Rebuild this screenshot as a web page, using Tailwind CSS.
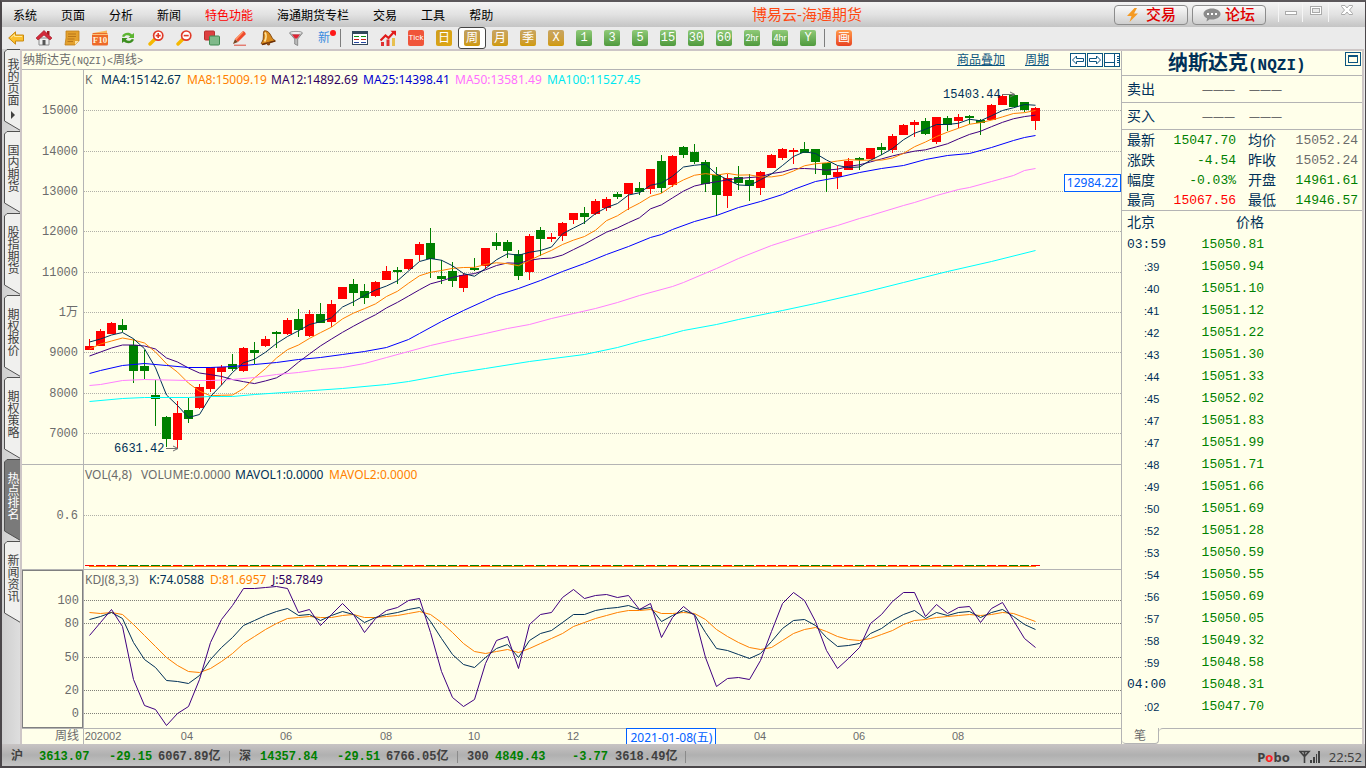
<!DOCTYPE html>
<html lang="zh-CN">
<head>
<meta charset="utf-8">
<meta name="viewport" content="width=device-width, initial-scale=1">
<title>博易云-海通期货</title>
<script src="https://cdn.jsdelivr.net/npm/@tailwindcss/browser@4"></script>
</head>
<body class="h-screen overflow-hidden bg-[#ebebeb] font-['Liberation_Sans','Noto_Sans_CJK_SC',sans-serif] text-xs text-black">
<div class="flex h-full flex-col border-t-2 border-r border-b-2 border-l-2 border-[#4b474a] border-t-[#5b575a]">

  <!-- Menu bar -->
  <header class="relative flex h-[25px] shrink-0 items-center bg-linear-to-b from-[#f4f4f4] via-[#e2e2e2] to-[#c4c4c4] pl-[11px]">
    <nav class="flex gap-6 pt-[2px] leading-4" aria-label="主菜单">
      <button>系统</button><button>页面</button><button>分析</button><button>新闻</button>
      <button class="text-[#ff0000]">特色功能</button><button>海通期货专栏</button>
      <button>交易</button><button>工具</button><button>帮助</button>
    </nav>
    <h1 class="absolute left-[750px] text-[15px] leading-5 text-[#ff4812]">博易云-海通期货</h1>
    <div class="ml-auto flex items-center gap-1">
      <button class="flex h-5 w-[74px] items-center justify-center gap-[6px] rounded border border-[#8c8c8c] bg-linear-to-b from-[#fafafa] to-[#cfcfcf] text-[15px] font-medium leading-4 text-[#e00000]">
        <svg class="size-[14px]" viewBox="0 0 14 14" aria-hidden="true"><path d="M8.500 0 1 8h4.500L3.500 14 12 5.500H8L11 0z" fill="#f59a23"/></svg>交易</button>
      <button class="flex h-5 w-[74px] items-center justify-center gap-1 rounded border border-[#8c8c8c] bg-linear-to-b from-[#fafafa] to-[#cfcfcf] text-[15px] font-medium leading-4 text-[#e00000]">
        <svg class="h-[14px] w-[18px]" viewBox="0 0 18 14" aria-hidden="true"><path d="M9 .5c4.700 0 8.500 2.400 8.500 5.500S13.700 11.500 9 11.500c-.8 0-1.500-.1-2.200-.2L3.500 13.500 4 10.300C1.900 9.300.5 7.800.5 6 .5 2.900 4.300.5 9 .5z" fill="#8b8b8b"/><g fill="#fff"><rect x="4" y="5" width="2" height="2"/><rect x="8" y="5" width="2" height="2"/><rect x="12" y="5" width="2" height="2"/></g></svg>论坛</button>
    </div>
    <div class="flex h-5 self-start pl-[12px] text-[#aaa]">
      <button aria-label="最小化" class="flex h-5 w-6 items-center justify-center border-l border-[#f5f5f5]"><svg width="14" height="14" aria-hidden="true"><rect x="1.500" y="6.500" width="11" height="3" fill="#fff" stroke="#aaa"/></svg></button>
      <button aria-label="还原" class="flex h-5 w-[26px] items-center justify-center border-l border-[#f5f5f5]"><svg width="14" height="14" aria-hidden="true"><rect x="1.500" y="1.500" width="11" height="8" fill="#fff" stroke="#aaa"/><rect x="3.500" y="3.500" width="7" height="4" fill="#e8e8e8" stroke="#aaa"/></svg></button>
      <button aria-label="关闭" class="flex h-5 w-[37px] items-center justify-center border-l border-[#f5f5f5]"><svg width="14" height="14" aria-hidden="true"><path d="M1.500.5h3.500L7 3l2-2.500h3.500v1L9.500 5l3 3.500v1H9L7 7l-2 2.500H1.500v-1l3-3.500-3-3.500z" fill="#fff" stroke="#aaa"/></svg></button>
    </div>
  </header>

  <!-- Toolbar -->
  <div role="toolbar" aria-label="工具栏" class="flex h-[22px] shrink-0 items-center bg-[#ebebeb] [&>button]:flex [&>button]:h-[22px] [&>button]:w-7 [&>button]:shrink-0 [&>button]:items-center [&>button]:justify-center">
    <button aria-label="后退"><svg width="16" height="16" viewBox="0 0 16 16"><path d="M.7 8 7.500 1.800V5h8v6h-8v3.200z" fill="#fbc02d" stroke="#c98a12"/><path d="M3 7.500 6.500 4.500V6.500H14" fill="none" stroke="#ffe89a"/></svg></button>
    <button aria-label="主页"><svg width="16" height="16" viewBox="0 0 16 16"><path d="M3 8h10v7H3z" fill="#efefef" stroke="#8a8a8a"/><path d="M6.500 10h3v5h-3z" fill="#555"/><path d="M11 1h2.500v4H11z" fill="#a01818"/><path d="M8 .5 0 8l2 2 6-5 6 5 2-2z" fill="#d32a3a" stroke="#9d1525" stroke-width=".6"/></svg></button>
    <button aria-label="便笺"><svg width="16" height="16" viewBox="0 0 16 16"><path d="M2 1h13v10l-4 4H1L2 8z" fill="#e3a02c" stroke="#c07f18" stroke-width=".8"/><path d="M15 11h-4v4z" fill="#fbe0a0"/><path d="M4 4h8M4 6.500h8M3.500 9h7M3.500 11.500H9" stroke="#b9761a"/></svg></button>
    <button aria-label="F10"><svg width="16" height="16" viewBox="0 0 16 16"><path d="M1 3 15 .5V4H1z" fill="#f7b55a"/><rect x="0" y="3" width="16" height="12.500" rx="1.500" fill="#ee6a28"/><path d="M0 4.500h16" stroke="#f9c37c"/><text x="8" y="13" text-anchor="middle" font-size="9" font-weight="700" font-family="Liberation Serif" fill="#fff2d8">F10</text></svg></button>
    <button aria-label="刷新"><svg width="16" height="16" viewBox="0 0 16 16"><path d="M2 6.500C3 2.800 9 1.500 12 4.500L14 3v5H8.500l1.700-1.700C8 4.600 5 5 4.300 7z" fill="#5cb531"/><path d="M14 9.500c-1 3.700-7 5-10 2L2 13V8h5.500L5.800 9.700c2.200 1.700 5.200 1.300 5.900-.7z" fill="#3d8f20"/></svg></button>
    <button aria-label="放大"><svg width="16" height="16" viewBox="0 0 16 16"><path d="M6.500 9.500 2 14" stroke="#f5b800" stroke-width="3.400" stroke-linecap="round"/><circle cx="10.200" cy="5.600" r="4.600" fill="#fff" stroke="#e03a28" stroke-width="1.700"/><path d="M7.700 5.600h5M10.200 3.100v5" stroke="#e03a28" stroke-width="1.600"/></svg></button>
    <button aria-label="缩小"><svg width="16" height="16" viewBox="0 0 16 16"><path d="M6.500 9.500 2 14" stroke="#f5b800" stroke-width="3.400" stroke-linecap="round"/><circle cx="10.200" cy="5.600" r="4.600" fill="#fff" stroke="#e03a28" stroke-width="1.700"/><path d="M7.700 5.600h5" stroke="#e03a28" stroke-width="1.600"/></svg></button>
    <button aria-label="叠加"><svg width="16" height="16" viewBox="0 0 16 16"><rect x=".5" y="1" width="10" height="9" rx="1" fill="#dc4040" stroke="#b83030"/><rect x="5.500" y="6" width="10" height="9" rx="1" fill="#7fb98a" stroke="#3f8a50"/></svg></button>
    <button aria-label="画线"><svg width="16" height="16" viewBox="0 0 16 16"><path d="m1 14 2-5 3 3z" fill="#7b4a24"/><path d="M3 9 10.500 1.500c1-1 4 1.800 3 3L6 12z" fill="#ee4a2c"/><path d="M3 9 10.500 1.500l1 .8L4.300 10z" fill="#ff9a6a"/><path d="M2 15.200h12" stroke="#e04a3a" stroke-width="1"/></svg></button>
    <button aria-label="预警"><svg width="16" height="16" viewBox="0 0 16 16"><path d="M4 1c2-.7 4.500.5 6 3l2.500 4.500L15.500 11 2.500 14.500c-1.500-.5-1.500-1.500-.5-2.500C4.500 9 2.500 3 4 1z" fill="#d98a1c" stroke="#7d430c" stroke-width=".9"/><path d="M5 2.500c1.500 2 1.300 6-.5 9" stroke="#ffe09a" stroke-width="1.800" fill="none"/><path d="m2 14.500 13-3.500" stroke="#6b2f08" stroke-width="1.300"/><circle cx="8.500" cy="13.800" r="1.800" fill="#8c4a10"/></svg></button>
    <button aria-label="筛选"><svg width="16" height="16" viewBox="0 0 16 16"><path d="M1.500 3c0-2 13-2 13 0L9.700 9v6.500l-3-1.500V9z" fill="#b9b9b9" stroke="#7c7c7c" stroke-width=".8"/><ellipse cx="8" cy="3" rx="6" ry="1.600" fill="#eee" stroke="#8a8a8a" stroke-width=".6"/><path d="M4 4.500h8L9 8.500H7z" fill="#e02434"/></svg></button>
    <button class="relative text-xs leading-4 text-[#3a8be0]">新<span class="absolute top-[3px] right-[2px] size-[6px] rounded-full bg-[#ff1818]"></span></button>
    <div class="flex w-2 shrink-0 pl-[2px]"><span class="h-[18px] w-px bg-[#7d7d7d]"></span></div>
    <button aria-label="报价"><svg width="16" height="16" viewBox="0 0 16 16" shape-rendering="crispEdges"><path d="M.5 1.500h15v13H.5z" fill="#fff" stroke="#33485c"/><path d="M1 2h14v2H1z" fill="#33485c"/><path d="M2 6.500h5M9 6.500h5" stroke="#109010"/><path d="M2 9.500h5M9 9.500h5" stroke="#d01818"/><path d="M2 12.500h5M9 12.500h5" stroke="#2848a0"/></svg></button>
    <button aria-label="走势"><svg width="16" height="16" viewBox="0 0 16 16"><path d="M1 12h3v4H1zM6.500 9.500h3V16h-3z" fill="#e03030"/><path d="M12 8h3v8h-3z" fill="#e8c050"/><path d="M.5 10.500 5.500 5.500 8.500 8 13.500 2.500" fill="none" stroke="#e01c1c" stroke-width="2.200"/><path d="M10.500.7H16V6z" fill="#e01c1c"/></svg></button>
    <button><span class="flex size-4 items-center justify-center rounded-[2px] bg-[#f0553a] font-['Roboto'] text-[8px] leading-4 font-normal text-white">Tick</span></button>
    <button><span class="flex size-4 items-center justify-center rounded-[2px] bg-linear-to-br from-[#cf9d1c] to-[#e0a810] text-xs leading-4 text-white">日</span></button>
    <button aria-pressed="true" class="rounded-[3px] border border-[#444] bg-white"><span class="flex size-4 items-center justify-center rounded-[2px] bg-linear-to-b from-[#c0a060] to-[#d09a00] text-xs leading-4 text-white">周</span></button>
    <button><span class="flex size-4 items-center justify-center rounded-[2px] bg-linear-to-b from-[#c8a560] to-[#d09a00] text-xs leading-4 text-white">月</span></button>
    <button><span class="flex size-4 items-center justify-center rounded-[2px] bg-linear-to-b from-[#c8a560] to-[#d09a00] text-xs leading-4 text-white">季</span></button>
    <button><span class="flex size-4 items-center justify-center rounded-[2px] bg-linear-to-b from-[#c8a560] to-[#d09a00] font-['Liberation_Mono'] text-xs leading-4 text-white">X</span></button>
    <button><span class="flex size-4 items-center justify-center rounded-[2px] bg-linear-to-b from-[#8fca78] to-[#4f9a3c] font-['Liberation_Mono'] text-xs leading-4 text-white">1</span></button>
    <button><span class="flex size-4 items-center justify-center rounded-[2px] bg-linear-to-b from-[#8fca78] to-[#4f9a3c] font-['Liberation_Mono'] text-xs leading-4 text-white">3</span></button>
    <button><span class="flex size-4 items-center justify-center rounded-[2px] bg-linear-to-b from-[#8fca78] to-[#4f9a3c] font-['Liberation_Mono'] text-xs leading-4 text-white">5</span></button>
    <button><span class="flex size-4 items-center justify-center rounded-[2px] bg-linear-to-b from-[#8fca78] to-[#4f9a3c] font-['Liberation_Mono'] text-xs leading-4 text-white">15</span></button>
    <button><span class="flex size-4 items-center justify-center rounded-[2px] bg-linear-to-b from-[#8fca78] to-[#4f9a3c] font-['Liberation_Mono'] text-xs leading-4 text-white">30</span></button>
    <button><span class="flex size-4 items-center justify-center rounded-[2px] bg-linear-to-b from-[#8fca78] to-[#4f9a3c] font-['Liberation_Mono'] text-xs leading-4 text-white">60</span></button>
    <button><span class="flex size-4 items-center justify-center rounded-[2px] bg-linear-to-b from-[#8fca78] to-[#4f9a3c] font-['Roboto'] text-[9px] leading-4 text-white">2hr</span></button>
    <button><span class="flex size-4 items-center justify-center rounded-[2px] bg-linear-to-b from-[#8fca78] to-[#4f9a3c] font-['Roboto'] text-[9px] leading-4 text-white">4hr</span></button>
    <button><span class="flex size-4 items-center justify-center rounded-[2px] bg-linear-to-b from-[#8fca78] to-[#4f9a3c] font-['Liberation_Mono'] text-xs leading-4 text-white">Y</span></button>
    <div class="flex w-2 shrink-0 pl-[2px]"><span class="h-[18px] w-px bg-[#7d7d7d]"></span></div>
    <button><span class="flex size-4 items-center justify-center rounded-[3px] bg-linear-to-b from-[#ff9a4a] to-[#e84020] text-xs leading-4 text-white">画</span></button>
  </div>

  <!-- Work area -->
  <main class="flex min-h-0 flex-1">
    <nav id="pages" aria-label="页面标签" class="flex w-[18px] shrink-0 flex-col bg-linear-to-r from-[#cfcfcf] to-[#dedede] pl-[2px]"></nav>

    <div class="flex min-w-0 flex-1 border-t-2 border-r-2 border-l-2 border-[#cdc6c6] bg-[#ffffea]">
      <section class="flex min-w-0 flex-1 flex-col" aria-label="K线图">
        <div class="flex h-[19px] shrink-0 items-center border-b border-[#b4b4b4] pr-px pl-px leading-4 text-[#6b6b6b]">
          <h2 class="pt-px">纳斯达克<span class="font-['Liberation_Mono'] text-[10px]">(NQZI)&lt;</span>周线<span class="font-['Liberation_Mono'] text-[10px]">&gt;</span></h2>
          <a href="#" class="mr-5 ml-auto text-[#0c5580] underline">商品叠加</a>
          <a href="#" class="mr-[21px] text-[#0c5580] underline">周期</a>
          <button aria-label="左移"><svg width="17" height="14" fill="#fff" stroke="#0c5580"><rect x=".5" y=".5" width="15" height="13"/><path d="M2.500 7 6.500 3v2.500h7v3h-7V11z"/></svg></button>
          <button aria-label="右移"><svg width="17" height="14" fill="#fff" stroke="#0c5580"><rect x=".5" y=".5" width="15" height="13"/><path d="M13.500 7 9.500 3v2.500h-7v3h7V11z"/></svg></button>
          <button aria-label="布局"><svg width="16" height="14" fill="none" stroke="#0c5580"><rect x=".5" y=".5" width="15" height="13" fill="#fff"/><path d="M10.500 1v12M1 9.500h9.500M13 3.500h2M13 5.500h2M13 7.500h2M13 9.500h2"/></svg></button>
        </div>

        <!-- Price -->
        <div class="flex min-h-0 flex-[394] border-b border-[#b4b4b4]">
          <svg id="axis1" class="h-full w-[61px] shrink-0" aria-hidden="true"></svg>
          <div class="relative min-w-0 flex-1 border-l border-[#b4b4b4]">
            <svg id="price" class="block h-full w-full" viewBox="84 70 1037 394" preserveAspectRatio="none" role="img" aria-label="周K线"></svg>
            <div class="absolute inset-x-0 top-0 flex pl-px font-['Noto_Sans'] leading-5 text-[#003058]">
              <span class="w-[16px] text-[#6b6b6b]">K</span><span class="w-[86px]">MA4:15142.67</span><span class="w-[84px] text-[#ff8000]">MA8:15009.19</span><span class="w-[92px] text-[#300060]">MA12:14892.69</span><span class="w-[92px] text-[#0000d0]">MA25:14398.41</span><span class="w-[92px] text-[#ff70ff]">MA50:13581.49</span><span class="text-[#00e8f0]">MA100:11527.45</span>
            </div>
            <span class="absolute top-[6.300%] right-[11.600%] -translate-y-1/2 font-['Liberation_Mono'] text-xs text-[#003058]">15403.44</span>
            <span class="absolute top-[96.200%] left-[30px] -translate-y-1/2 font-['Liberation_Mono'] text-xs text-[#003058]">6631.42</span>
            <output class="absolute top-[28.600%] right-0 h-[18px] w-[57px] -translate-y-1/2 border border-[#0060ff] bg-[#ffffff] text-center font-['Noto_Sans'] text-xs leading-4 text-[#0060ff]">12984.22</output>
          </div>
        </div>

        <!-- Volume -->
        <div class="flex min-h-0 flex-[104] border-b border-[#b4b4b4]">
          <svg id="axis2" class="h-full w-[61px] shrink-0" aria-hidden="true"></svg>
          <div class="relative min-w-0 flex-1 border-l border-[#b4b4b4]">
            <svg id="volume" class="block h-full w-full" viewBox="84 465 1037 104" preserveAspectRatio="none" role="img" aria-label="成交量"></svg>
            <div class="absolute inset-x-0 top-0 flex gap-1 pl-px font-['Noto_Sans'] leading-5 text-[#6b6b6b]">
              <span class="w-[52px]">VOL(4,8)</span><span class="w-[90px]">VOLUME:0.0000</span><span class="w-[90px] text-[#003058]">MAVOL1:0.0000</span><span class="text-[#ff8000]">MAVOL2:0.0000</span>
            </div>
          </div>
        </div>

        <!-- KDJ -->
        <div class="flex min-h-0 flex-[158] border-b border-[#b4b4b4]">
          <svg id="axis3" class="h-full w-[61px] shrink-0 border border-[#808080]" aria-hidden="true"></svg>
          <div class="relative min-w-0 flex-1 border-l border-[#b4b4b4]">
            <svg id="kdj" class="block h-full w-full" viewBox="84 570 1037 158" preserveAspectRatio="none" role="img" aria-label="KDJ"></svg>
            <div class="absolute inset-x-0 top-0 flex gap-1 pl-px font-['Noto_Sans'] leading-5 text-[#6b6b6b]">
              <span class="w-[60px]">KDJ(8,3,3)</span><span class="w-[57px] text-[#003058]">K:74.0588</span><span class="w-[58px] text-[#ff8000]">D:81.6957</span><span class="text-[#300060]">J:58.7849</span>
            </div>
          </div>
        </div>

        <!-- Time axis -->
        <div class="flex h-[15px] shrink-0 leading-[15px] text-[#6b6b6b]">
          <button class="w-[61px] shrink-0 pr-1 text-right">周线</button>
          <div class="relative min-w-0 flex-1 border-l border-[#b4b4b4]">
            <svg id="dates" class="block h-full w-full" aria-hidden="true"></svg>
            <output class="absolute -top-px left-[52.300%] h-4 w-[90px] border border-b-0 border-[#0060ff] bg-white text-center font-['Noto_Sans','Noto_Sans_CJK_SC'] leading-[17px] whitespace-nowrap text-[#0060ff]">2021-01-08(五)</output>
          </div>
        </div>
      </section>

      <!-- Quote panel -->
      <aside class="flex w-[241px] shrink-0 flex-col border-l border-[#b4b4b4] text-sm text-[#003058]" aria-label="报价">
        <div class="relative flex h-[25px] shrink-0 items-center border-b border-[#b4b4b4] pt-[2px] pl-[46px]">
          <h2 class="text-xl leading-6 font-bold">纳斯达克<span class="font-['Liberation_Mono'] text-base">(NQZI)</span></h2>
          <button aria-label="最大化" class="absolute top-px right-px"><svg class="block" width="16" height="14" fill="none" stroke="#0c5580"><rect x=".5" y=".5" width="15" height="13"/><rect x="3.500" y="3.500" width="9" height="7"/><path d="M4 4.500h8"/></svg></button>
        </div>
        <div class="flex h-[27px] shrink-0 items-center border-b border-[#b4b4b4] pl-[5px]"><span class="w-[75px]">卖出</span><span class="w-[47px] font-['Noto_Sans'] text-[11px] text-[#6b6b6b]">———</span><span class="font-['Noto_Sans'] text-[11px] text-[#6b6b6b]">———</span></div>
        <div class="flex h-[27px] shrink-0 items-center border-b border-[#b4b4b4] pl-[5px]"><span class="w-[75px]">买入</span><span class="w-[47px] font-['Noto_Sans'] text-[11px] text-[#6b6b6b]">———</span><span class="font-['Noto_Sans'] text-[11px] text-[#6b6b6b]">———</span></div>
        <div class="h-[81px] shrink-0 border-b border-[#b4b4b4] pr-1 pl-[5px]">
          <table class="w-full table-fixed border-collapse leading-5 [&_td]:p-0 [&_td]:pt-px [&_td]:text-right [&_td]:font-['Liberation_Mono'] [&_td]:text-[13px] [&_td]:leading-[19px] [&_td]:text-[#008000] [&_th]:p-0 [&_th]:text-left [&_th]:leading-5 [&_th]:font-normal [&_th]:whitespace-nowrap">
            <colgroup><col class="w-[30px]"><col class="w-[79px]"><col class="w-[42px]"><col></colgroup>
            <tr><th>最新</th><td>15047.70</td><th class="pl-3!">均价</th><td class="text-[#6b6b6b]!">15052.24</td></tr>
            <tr><th>涨跌</th><td>-4.54</td><th class="pl-3!">昨收</th><td class="text-[#6b6b6b]!">15052.24</td></tr>
            <tr><th>幅度</th><td>-0.03%</td><th class="pl-3!">开盘</th><td>14961.61</td></tr>
            <tr><th>最高</th><td class="text-[#ff0000]!">15067.56</td><th class="pl-3!">最低</th><td>14946.57</td></tr>
          </table>
        </div>
        <div class="min-h-0 flex-1 overflow-hidden">
          <table class="w-[142px] table-fixed border-collapse">
            <thead><tr class="h-[22px]"><th class="p-0 pl-[5px] text-left leading-5 font-normal">北京</th><th class="w-[66px] p-0 text-right leading-5 font-normal">价格</th></tr></thead>
            <tbody id="ticks"></tbody>
          </table>
        </div>
        <div class="flex h-4 shrink-0">
          <button class="h-4 w-[37px] rounded-b-sm border-r border-b border-[#b4b4b4] text-center text-xs leading-4 text-[#6b6b6b]">笔</button>
          <span class="flex-1 rounded-tl-sm border-t border-[#b4b4b4]"></span>
        </div>
      </aside>
    </div>
    <div class="w-px shrink-0 bg-[#ebebeb]"></div>
  </main>

  <!-- Status bar -->
  <footer class="flex h-[22px] shrink-0 items-center bg-linear-to-b from-[#c8c4c4] via-[#b0b0b0] to-[#c4c4c4] pt-[3px] pl-[9px] font-['Liberation_Mono','Noto_Sans_CJK_SC'] leading-4 font-bold text-[#404040]">
    <span class="w-7">沪</span><span class="w-[70px] text-[#008000]">3613.07</span><span class="w-[49px] text-[#008000]">-29.15</span><span class="w-[71px]">6067.89亿</span>
    <span class="mr-[9px] h-3 w-px bg-[#8a8a8a]"></span>
    <span class="w-[21px]">深</span><span class="w-[77px] text-[#008000]">14357.84</span><span class="w-[49px] text-[#008000]">-29.51</span><span class="w-[71px]">6766.05亿</span>
    <span class="mr-[9px] h-3 w-px bg-[#8a8a8a]"></span>
    <span class="w-7">300</span><span class="w-[77px] text-[#008000]">4849.43</span><span class="w-[43px] text-[#008000]">-3.77</span><span class="w-[70px]">3618.49亿</span>
    <span class="h-3 w-px bg-[#8a8a8a]"></span>
    <span class="mr-[9px] ml-auto font-['Noto_Sans'] text-[13px]">P<span class="text-[#ff2020]">o</span>bo</span>
    <svg class="mr-[9px]" width="21" height="13" aria-hidden="true"><path d="M1 1.500h9L5.500 6.500zM5.500 1v12" fill="none" stroke="#404040" stroke-width="1.600"/><path d="M11 10h2v3h-2zM14 7h2v6h-2zM17 4h1v9h-1zM19 1h2v12h-2z" fill="#404040"/></svg>
    <time class="pr-[3px] font-['Noto_Sans'] text-[13px] font-normal">22:52</time>
  </footer>
</div>

<script>
const NS = 'http://www.w3.org/2000/svg';
const el = (parent, tag, attrs, text) => {
  const n = document.createElementNS(NS, tag);
  for (const k in attrs) n.setAttribute(k, attrs[k]);
  if (text !== undefined) n.textContent = text;
  document.getElementById(parent).appendChild(n);
};
const RED = '#ff0000', GREEN = '#008000';
const cx = i => 89.5 + 11 * i;

// direction, high, body top, body bottom, low
const candles = `r339,346,350,350 r329,331,346,346 r322,323,334,334 g319,325,330,332 g339,345,371,383 g350,366,371,379 g380,395,399,426 g416,417,439,447 r401,413,440,449 g398,410,419,423
r384,387,408,409 r367,367,389,392 r365,367,372,385 g354,364,369,371 r347,348,371,372 g342,350,353,364 r336,339,346,347 g331,332,334,348 r318,320,334,335 g309,319,330,337
r310,314,336,337 g303,314,323,323 r300,304,322,327 r287,287,299,299 g279,284,293,306 g284,291,298,304 r281,282,296,297 r266,271,280,280 g267,270,272,284 r259,259,269,270
r242,244,255,261 g228,243,259,278 g260,276,279,284 g262,271,281,287 r273,275,288,292 g258,268,270,271 r248,248,266,269 g233,242,246,250 g240,242,251,258 g250,254,276,280
r234,236,272,280 g227,230,239,256 r233,237,239,242 r222,223,236,241 r213,213,220,224 g207,213,217,224 r199,201,214,215 r197,199,208,211 g192,194,197,199 r183,183,194,210
g182,188,192,195 r169,169,189,194 g155,161,188,193 r155,156,185,187 g146,147,155,158 g144,152,162,164 g160,162,184,192 g167,175,195,216 r174,178,196,208 g166,177,183,190
g174,180,186,201 r171,172,188,195 r154,155,168,168 r148,149,158,160 r148,150,152,164 g142,149,153,153 g149,149,162,174 g163,163,175,192 r166,172,177,189 r158,161,170,170
g157,158,160,170 r148,148,159,159 g143,147,150,155 r134,136,150,153 r124,125,135,135 r120,122,125,137 g118,121,134,135 r117,117,142,144 g116,118,125,131 r114,117,121,128
g115,116,118,124 g119,120,123,135 r104,105,120,120 r95,96,105,105 g95,95,107,107 g102,102,110,112 r107,108,121,130`
  .split(/\s+/).map(s => [s[0], ...s.slice(1).split(',').map(Number)]);

const line = (id, pts, color) => el(id, 'polyline', {points: pts.map(p => p.join(',')).join(' '), fill: 'none', stroke: color, 'stroke-width': 1, 'vector-effect': 'non-scaling-stroke'});
const grid = (id, ys, color) => ys.forEach(y => el(id, 'line', {x1: 84, x2: 1121, y1: y + .5, y2: y + .5, stroke: color, 'stroke-dasharray': '1 1', 'shape-rendering': 'crispEdges', 'vector-effect': 'non-scaling-stroke'}));

grid('price', [110, 151, 191, 231, 272, 312, 352, 393, 433], '#b0b0a8');
candles.forEach(([d, h, t, b, l], i) => {
  const fill = d === 'r' ? RED : GREEN, x = cx(i);
  el('price', 'rect', {x: x - .5, y: h, width: 1, height: l - h, fill});
  el('price', 'rect', {x: x - 4.5, y: t, width: 9, height: b - t, fill});
  el('volume', 'rect', {x: x - 4.5, y: 565, width: 9, height: 1, fill, 'shape-rendering': 'crispEdges'});
});

const close = candles.map(c => c[0] === 'r' ? c[2] : c[3]);
const average = (n, head) => close.map((_, i) => [cx(i), i < head.length ? head[i] : close.slice(i - n + 1, i + 1).reduce((a, b) => a + b) / n]);
line('price', average(12, [356, 352, 348, 345, 345, 346, 349, 358, 362, 368, 373]), '#400080');
line('price', average(8, [349, 344, 341, 338, 340, 343, 352]), '#ff8000');
line('price', average(4, [342, 339, 335]), '#003058');
const at = pairs => pairs.trim().split(' ').map(s => s.split(':').map(Number)).map(([i, y]) => [cx(i), y + .5]);
line('price', at('0:373 1:370 3:365 5:363 7:365 9:367 11:367 13:366 15:364 17:362 19:359 21:357 23:354 25:351 27:347 29:339 30:333 32:321 34:310 36:300 37:295 39:288 41:280 43:271 45:263 47:254 49:246 51:237 52:234 53:229 55:221 57:215 59:207 61:201 63:194 64:189 66:181 68:177 70:172 72:168 74:165 76:159 78:155 80:153 82:147 84:140 85:137 86:135'), '#0000ff');
line('price', at('0:385 1:384 3:380 5:379 9:380 11:380 13:379 15:377 17:374 19:372 21:369 23:367 25:363 27:357 29:351 31:345 33:340 36:333 38:328 40:324 42:318 44:313 46:308 48:302 50:295 53:286 54:282 57:268 59:258 62:245 66:231 68:225 70:218 71:215 74:205 75:202 77:195 79:189 80:187 82:181 83:178 84:175 85:170 86:168'), '#ff80ff');
line('price', at('0:401 3:398 5:397 9:397 11:396 13:396 15:394 19:391 23:388 27:384 29:381 33:373 36:368 40:361 45:354 48:347 50:341 52:336 54:330 57:324 59:319 63:310 66:303 70:293 74:282 78:271 82:261 86:250'), '#00ffff');
el('price', 'path', {d: 'M166 448.500h11M173 446l5 2.500-5 2.500M1002 94.500h12M1010 92l5 2.500-5 2.500', fill: 'none', stroke: '#707070'});

grid('volume', [515], '#b0b0a8');
el('volume', 'rect', {x: 89, y: 566, width: 947, height: 1, fill: '#ff8000', 'shape-rendering': 'crispEdges'});

grid('kdj', [600, 623, 657, 690, 713], '#808078');
const series = s => s.split(' ').map((y, i) => [cx(i), +y + .5]);
line('kdj', series('612 613 612 614 624 635 646 657 665 671 672 668 661 653 643 636 629 623 618 617 616 617 617 615 614 617 617 616 615 613 611 614 622 632 643 651 653 651 649 652 648 643 638 633 626 622 618 615 612 610 610 609 613 613 612 613 619 629 636 642 647 649 647 640 633 629 627 631 636 639 640 638 634 630 624 620 619 617 616 615 614 615 614 612 613 617 621'), '#ff8000');
line('kdj', series('619 616 612 618 642 659 667 680 681 683 675 659 647 637 625 620 615 611 608 615 614 620 615 611 614 622 617 614 612 609 607 621 638 654 664 667 657 648 644 657 640 633 630 622 614 614 610 608 607 605 609 607 621 615 610 614 632 648 650 654 658 653 641 628 620 619 625 637 646 645 643 633 628 620 614 610 618 612 615 612 611 617 612 609 616 624 629'), '#003058');
line('kdj', series('635 622 609 626 679 705 709 725 713 706 679 642 619 605 588 588 587 586 588 612 609 625 614 603 614 632 618 610 607 600 598 632 671 697 706 699 663 640 636 668 624 614 612 597 589 598 595 594 597 595 609 603 637 617 606 615 657 686 678 677 679 660 631 603 592 600 621 650 668 658 647 623 614 601 592 592 616 604 613 607 606 622 608 602 620 638 647'), '#400080');

const axis = (id, top, height, labels) => labels.forEach(([t, y]) => el(id, 'text', {x: 56, y: ((y - top) / height * 100) + '%', dy: 4, 'text-anchor': 'end', 'font-family': 'Liberation Mono, Noto Sans CJK SC', 'font-size': 12, fill: '#6b6b6b'}, t));
axis('axis1', 70, 394, [['15000', 110], ['14000', 151], ['13000', 191], ['12000', 231], ['11000', 272], ['1万', 312], ['9000', 352], ['8000', 393], ['7000', 433]]);
axis('axis2', 465, 104, [['0.6', 515]]);
axis('axis3', 571, 156, [['100', 600], ['80', 623], ['50', 657], ['20', 690], ['0', 713]]);
[['202002', 103], ['04', 187], ['06', 286], ['08', 386], ['10', 474], ['12', 573], ['04', 760], ['06', 859], ['08', 958]].forEach(([t, x]) =>
  el('dates', 'text', {x: ((x - 84) / 1037 * 100) + '%', y: 11, 'text-anchor': 'middle', 'font-family': 'Liberation Sans', 'font-size': 11, fill: '#6b6b6b'}, t));

document.getElementById('ticks').innerHTML = `03:59 15050.81|:39 15050.94|:40 15051.10|:41 15051.12|:42 15051.22|:43 15051.30|:44 15051.33|:45 15052.02|:47 15051.83|:47 15051.99|:48 15051.71|:49 15051.66|:50 15051.69|:52 15051.28|:53 15050.59|:54 15050.55|:56 15050.69|:57 15050.05|:58 15049.32|:59 15048.58|04:00 15048.31|:02 15047.70`
  .split('|').map(r => r.split(' ')).map(([t, p]) => `<tr class="h-[22px]"><td class="p-0 pt-[2px] leading-5 ${t[0] === ':' ? 'pl-[22px] text-[11px]' : 'pl-[5px] font-[\'Liberation_Mono\'] text-[13px]'}">${t}</td><td class="p-0 pt-[2px] text-right font-['Liberation_Mono'] text-[13px] leading-5 text-[#008000]">${p}</td></tr>`).join('');

document.getElementById('pages').innerHTML = ['我的页面', '国内期货', '股指期货', '期权报价', '期权策略', '热点排名', '新闻资讯'].map((t, i) => {
  const on = i === 5;
  return `<button class="relative flex h-[82px] shrink-0 justify-center text-start ${i ? 'pt-[13px]' : 'pt-[9px]'} ${on ? 'text-white' : 'text-[#404040]'}">
    <svg class="absolute inset-0" width="16" height="82" aria-hidden="true"><path d="M16.500.5H3L.5 3v69L16.500 81.500" fill="${on ? '#7a7a7a' : '#f0f0ee'}" stroke="#505050"/>${i ? '' : '<path d="M7 62v8l4-4z" fill="#404040"/>'}</svg>
    <span class="relative leading-4 [writing-mode:vertical-rl]">${t}</span></button>`;
}).join('');
</script>
</body>
</html>
